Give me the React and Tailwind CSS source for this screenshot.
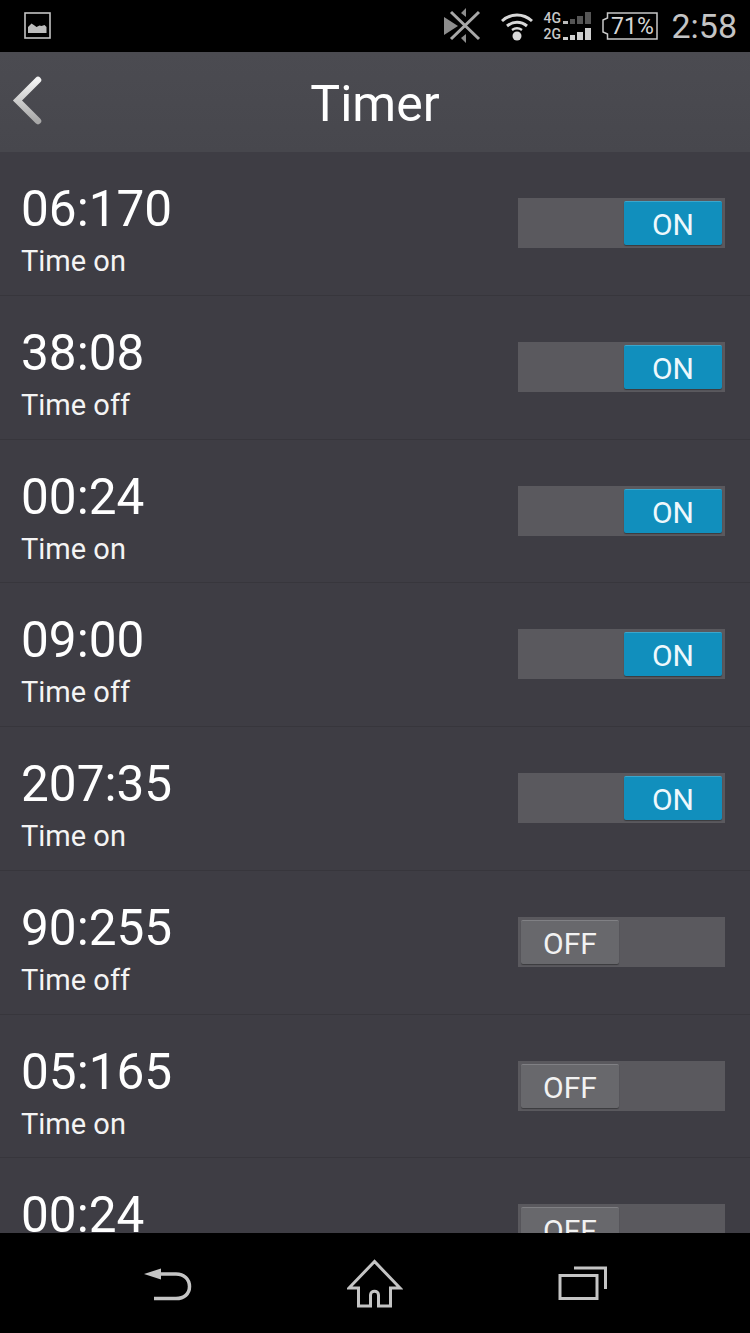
import React from "react";

const rows = [
  { time: "06:170", label: "Time on", on: true },
  { time: "38:08", label: "Time off", on: true },
  { time: "00:24", label: "Time on", on: true },
  { time: "09:00", label: "Time off", on: true },
  { time: "207:35", label: "Time on", on: true },
  { time: "90:255", label: "Time off", on: false },
  { time: "05:165", label: "Time on", on: false },
  { time: "00:24", label: "Time off", on: false },
];

function Bars({ colors }) {
  return (
    <svg width="28" height="14" viewBox="0 0 28 14">
      <rect x="0" y="10" width="5" height="3" fill={colors[0]} />
      <rect x="7" y="8" width="5" height="5" fill={colors[1]} />
      <rect x="14" y="5" width="6" height="8" fill={colors[2]} />
      <rect x="22" y="1" width="6" height="12" fill={colors[3]} />
    </svg>
  );
}

function StatusBar() {
  return (
    <div className="h-[52px] shrink-0 bg-black flex items-center text-[#c8c8c8]">
      {/* Picture notification */}
      <svg width="28" height="28" viewBox="0 0 28 28" className="ml-[24px]">
        <rect x="1" y="1" width="25" height="25" fill="none" stroke="#c4c4c4" strokeWidth="1.6" />
        <path d="M4 21v-6l3.500-3.500 3 2 2 1.500 3-1.500 2 .5 3-1 2 2v6z" fill="#bdbdbd" />
      </svg>
      <div className="ml-auto flex items-center">
        {/* Crossed out bluetooth */}
        <svg width="38" height="36" viewBox="0 0 38 36">
          <path d="M0 9l14 9-14 9z" fill="#8d8d8d" />
          <path d="M22 0v9l-5-4zM22 35v-9l-5 4z" fill="#8d8d8d" />
          <path d="M7 4l28 27M35 4L7 31" stroke="#a8a8a8" strokeWidth="3" />
        </svg>
        {/* Wifi */}
        <svg width="34" height="30" viewBox="0 0 34 30" className="ml-[18px]">
          <path d="M2 10c9-8 21-8 30 0" fill="none" stroke="#d8d8d8" strokeWidth="3" />
          <path d="M7 15c6-5 14-5 20 0" fill="none" stroke="#d8d8d8" strokeWidth="3" />
          <path d="M12 19c3-2 7-2 10 0" fill="none" stroke="#d8d8d8" strokeWidth="2.500" />
          <circle cx="17" cy="25" r="4.500" fill="#d8d8d8" />
        </svg>
        {/* Network */}
        <div className="ml-[9px] w-[48px] flex flex-col gap-[2px]">
          <div className="flex items-end h-[14px]">
            <span className="text-[14px] leading-[14px] font-medium w-[20px] text-[#c8c8c8]">4G</span>
            <Bars colors={["#bbbbbb", "#555555", "#555555", "#555555"]} />
          </div>
          <div className="flex items-end h-[14px]">
            <span className="text-[14px] leading-[14px] font-medium w-[20px] text-[#c8c8c8]">2G</span>
            <Bars colors={["#cfcfcf", "#cfcfcf", "#cfcfcf", "#cfcfcf"]} />
          </div>
        </div>
        {/* Battery */}
        <div className="ml-[11px] w-[56px] h-[28px] relative flex items-center justify-center pl-[4px] text-[23px] leading-none text-[#d6d6d6]">
          <svg width="56" height="28" viewBox="0 0 56 28" className="absolute left-0 top-0">
            <path d="M5.500 1H55v26H5.500V22L1 20V8l4.500-2z" fill="none" stroke="#c8c8c8" strokeWidth="1.500" />
          </svg>
          71%
        </div>
        <span className="ml-[13px] mr-[13px] text-[34px] leading-none text-[#c4c4c4]">2:58</span>
      </div>
    </div>
  );
}

function Header() {
  return (
    <div className="h-[100px] shrink-0 bg-gradient-to-b from-[#4b4b51] to-[#47474d] flex items-center relative">
      <svg width="32" height="50" viewBox="0 0 32 50" className="absolute left-[12px] top-[24px]">
        <defs>
          <linearGradient id="chev" x1="0" y1="0" x2="0" y2="1">
            <stop offset="0" stopColor="#f4f4f4" />
            <stop offset="1" stopColor="#a8a8a8" />
          </linearGradient>
        </defs>
        <path d="M26 4L5.500 24.500 26 45" fill="none" stroke="url(#chev)" strokeWidth="6.500" strokeLinecap="round" />
      </svg>
      <h1 className="w-full pt-[3px] text-center text-[50px] leading-none font-normal text-white">Timer</h1>
    </div>
  );
}

function Toggle({ on }) {
  return (
    <div
      className={`w-[207px] h-[50px] shrink-0 bg-[#5a595e] p-[3px] flex ${on ? "justify-end" : "justify-start"}`}
    >
      <div
        className={`w-[98px] h-[44px] rounded-[2px] pt-[3px] flex items-center justify-center text-[30px] leading-none border-t shadow-[0_1px_1px_rgba(0,0,0,0.35)] ${
          on ? "bg-[#118fbd] border-[#3ba6cc] text-[#eef8fc]" : "bg-[#68686c] border-[#808084] text-[#f2f2f2]"
        }`}
      >
        {on ? "ON" : "OFF"}
      </div>
    </div>
  );
}

function TimerRow({ time, label, on }) {
  return (
    <div className="h-[143.75px] shrink-0 border-b border-[#37363c] pl-[21px] pr-[25px] flex items-start justify-between">
      <div className="pt-[31px]">
        <div className="text-[49.5px] leading-[52px] text-white">{time}</div>
        <div className="mt-[8px] text-[29px] leading-[36px] text-[#f4f4f4]">{label}</div>
      </div>
      <div className="pt-[46px]">
        <Toggle on={on} />
      </div>
    </div>
  );
}

function NavBar() {
  return (
    <div className="h-[100px] shrink-0 bg-black flex items-start">
      <svg width="50" height="38" viewBox="0 0 50 38" className="ml-[143px] mt-[33px]">
        <path d="M1 8l17-5.500v11z" fill="#c4c4c4" />
        <path d="M16 8h17c8 0 13.500 5 13.500 12.500S41 32.500 33 32.500H11" fill="none" stroke="#c4c4c4" strokeWidth="3.500" />
      </svg>
      <svg width="56" height="50" viewBox="0 0 56 50" className="ml-[154px] mt-[26px]">
        <path
          d="M27.500 2.500L2 29h9.500v18h12V36c0-5 8-5 8 0v11h12V29h9.500z"
          fill="none"
          stroke="#c4c4c4"
          strokeWidth="3"
          strokeLinejoin="miter"
        />
      </svg>
      <svg width="50" height="36" viewBox="0 0 50 36" className="ml-[155px] mt-[33px]">
        <path d="M16 2h31.500v21" fill="none" stroke="#c4c4c4" strokeWidth="3" />
        <rect x="2" y="9.500" width="37" height="23" fill="none" stroke="#c4c4c4" strokeWidth="3" />
      </svg>
    </div>
  );
}

export default function App() {
  return (
    <div
      className="w-[750px] h-[1333px] flex flex-col overflow-hidden bg-[#3e3d44]"
      style={{ fontFamily: "Roboto, sans-serif" }}
    >
      <StatusBar />
      <Header />
      <div className="flex-1 min-h-0 overflow-hidden flex flex-col">
        {rows.map((row, i) => (
          <TimerRow key={i} {...row} />
        ))}
      </div>
      <NavBar />
    </div>
  );
}
